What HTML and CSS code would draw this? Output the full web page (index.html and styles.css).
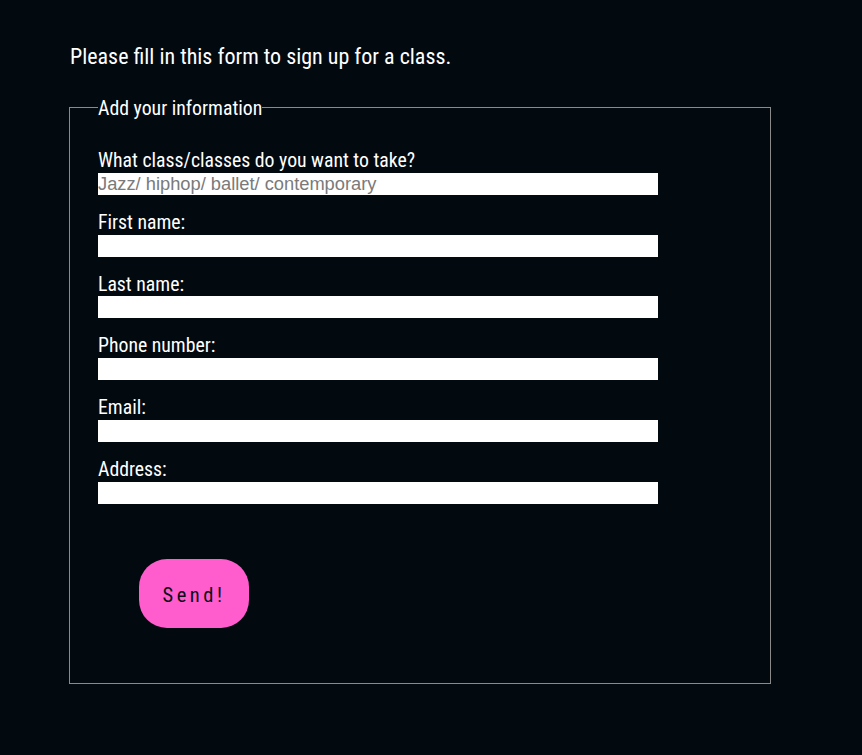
FILE: index.html
```html
<!DOCTYPE html>
<html>
<head>
<meta charset="utf-8">
<link rel="stylesheet" href="styles.css">
</head>
<body>
<main class="page">
  <p class="intro">Please fill in this form to sign up for a class.</p>
  <form class="signup">
    <fieldset class="box">
      <legend class="box-title">Add your information</legend>
      <div class="field">
        <label class="field-label" for="cls">What class/classes do you want to take?</label>
        <input class="field-input" id="cls" type="text" placeholder="Jazz/ hiphop/ ballet/ contemporary">
      </div>
      <div class="field">
        <label class="field-label" for="fn">First name:</label>
        <input class="field-input" id="fn" type="text">
      </div>
      <div class="field">
        <label class="field-label" for="ln">Last name:</label>
        <input class="field-input" id="ln" type="text">
      </div>
      <div class="field">
        <label class="field-label" for="ph">Phone number:</label>
        <input class="field-input" id="ph" type="text">
      </div>
      <div class="field">
        <label class="field-label" for="em">Email:</label>
        <input class="field-input" id="em" type="text">
      </div>
      <div class="field">
        <label class="field-label" for="ad">Address:</label>
        <input class="field-input" id="ad" type="text">
      </div>
      <button class="send" type="submit">Send!</button>
    </fieldset>
  </form>
</main>
</body>
</html>
```

FILE: styles.css
```css
html, body {
  margin: 0;
  padding: 0;
  background: #020a10;
}

.page {
  padding: 39px 0 0 70px;
  font-family: Roboto, "Liberation Sans", sans-serif;
  font-stretch: 87.5%;
  color: #ffffff;
}

.intro {
  margin: 0 0 18px 0;
  font-size: 22px;
  line-height: 36px;
}

.signup {
  margin: 0 0 0 -1px;
}

.box {
  margin: 0;
  width: 644px;
  border: 1px solid #8a8a8a;
  padding: 25px 28px 55px 28px;
  box-sizing: content-box;
}

.box-title {
  padding: 4px 0 0 0;
  font-size: 19.8px;
  line-height: 24px;
}

.field {
  display: flex;
  flex-direction: column;
  margin-bottom: 13px;
}

.field:last-of-type {
  margin-bottom: 0;
}

.field-label {
  padding-top: 3px;
  font-size: 19.75px;
  line-height: 23.8px;
}

.field-input {
  width: 560px;
  height: 22px;
  margin: 0;
  padding: 0;
  border: none;
  outline: none;
  background: #ffffff;
  font-family: "Liberation Sans", Arial, sans-serif;
  font-size: 18.3px;
  color: #000;
}

.field-input::placeholder {
  color: #7a7a7a;
}

.send {
  display: block;
  margin: 55px 0 0 41px;
  padding: 3px 0 0 0;
  width: 110px;
  height: 69px;
  border: none;
  border-radius: 28px;
  background: #ff5ccd;
  color: #0a0f1a;
  font-family: Roboto, "Liberation Sans", sans-serif;
  font-stretch: 87.5%;
  font-size: 20.5px;
  font-weight: 400;
  letter-spacing: 3.5px;
}
```
